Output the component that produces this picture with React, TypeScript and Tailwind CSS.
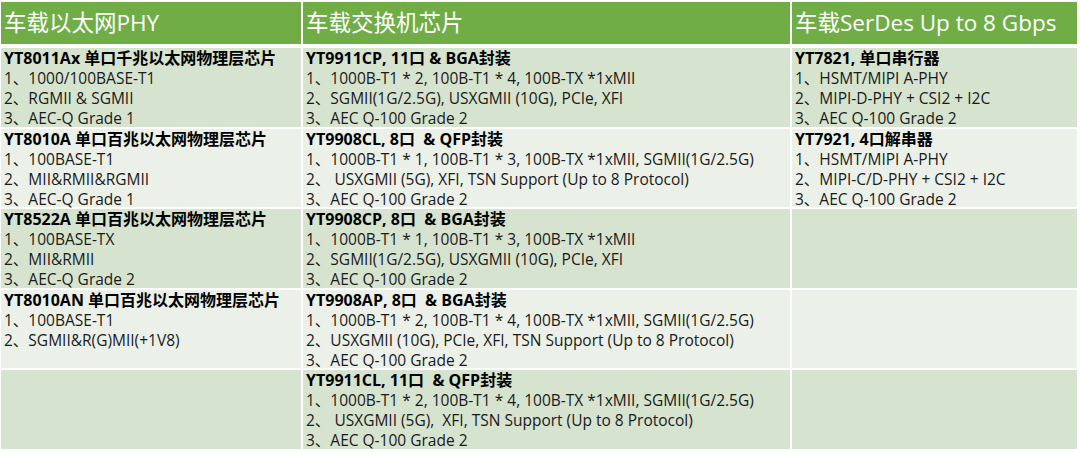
import React from "react";

type Cell = { title: string; items: string[] } | null;

const rows: Cell[][] = [
  [
    { title: "YT8011Ax 单口千兆以太网物理层芯片", items: ["1、1000/100BASE-T1", "2、RGMII & SGMII", "3、AEC-Q Grade 1"] },
    { title: "YT9911CP, 11口 & BGA封装", items: ["1、1000B-T1 * 2, 100B-T1 * 4, 100B-TX *1xMII", "2、SGMII(1G/2.5G), USXGMII (10G), PCIe, XFI", "3、AEC Q-100 Grade 2"] },
    { title: "YT7821, 单口串行器", items: ["1、HSMT/MIPI A-PHY", "2、MIPI-D-PHY + CSI2 + I2C", "3、AEC Q-100 Grade 2"] },
  ],
  [
    { title: "YT8010A 单口百兆以太网物理层芯片", items: ["1、100BASE-T1", "2、MII&RMII&RGMII", "3、AEC-Q Grade 1"] },
    { title: "YT9908CL, 8口  & QFP封装", items: ["1、1000B-T1 * 1, 100B-T1 * 3, 100B-TX *1xMII, SGMII(1G/2.5G)", "2、 USXGMII (5G), XFI, TSN Support (Up to 8 Protocol)", "3、AEC Q-100 Grade 2"] },
    { title: "YT7921, 4口解串器", items: ["1、HSMT/MIPI A-PHY", "2、MIPI-C/D-PHY + CSI2 + I2C", "3、AEC Q-100 Grade 2"] },
  ],
  [
    { title: "YT8522A 单口百兆以太网物理层芯片", items: ["1、100BASE-TX", "2、MII&RMII", "3、AEC-Q Grade 2"] },
    { title: "YT9908CP, 8口  & BGA封装", items: ["1、1000B-T1 * 1, 100B-T1 * 3, 100B-TX *1xMII", "2、SGMII(1G/2.5G), USXGMII (10G), PCIe, XFI", "3、AEC Q-100 Grade 2"] },
    null,
  ],
  [
    { title: "YT8010AN 单口百兆以太网物理层芯片", items: ["1、100BASE-T1", "2、SGMII&R(G)MII(+1V8)"] },
    { title: "YT9908AP, 8口  & BGA封装", items: ["1、1000B-T1 * 2, 100B-T1 * 4, 100B-TX *1xMII, SGMII(1G/2.5G)", "2、USXGMII (10G), PCIe, XFI, TSN Support (Up to 8 Protocol)", "3、AEC Q-100 Grade 2"] },
    null,
  ],
  [
    null,
    { title: "YT9911CL, 11口  & QFP封装", items: ["1、1000B-T1 * 2, 100B-T1 * 4, 100B-TX *1xMII, SGMII(1G/2.5G)", "2、 USXGMII (5G),  XFI, TSN Support (Up to 8 Protocol)", "3、AEC Q-100 Grade 2"] },
    null,
  ],
];

const headers = ["车载以太网PHY", "车载交换机芯片", "车载SerDes Up to 8 Gbps"];

export default function App() {
  return (
    <div
      className="w-[1080px] h-[453px] bg-white pt-[2px] pl-[1px] overflow-hidden"
      style={{ fontFamily: '"Open Sans", "Noto Sans CJK SC", sans-serif' }}
    >
      <div className="grid grid-cols-[300px_487px_285px] gap-x-[2px]">
        {headers.map((h) => (
          <div
            key={h}
            className="h-[42px] mb-[4px] bg-[#70ad47] text-white text-[22.5px] leading-[42px] pl-[3px] whitespace-nowrap"
          >
            {h}
          </div>
        ))}
        {rows.map((row, ri) => (
          <React.Fragment key={ri}>
            {row.map((cell, ci) => (
              <div
                key={ci}
                className={`h-[78.5px] mb-[2px] pl-[3px] text-[15.5px] leading-[20px] text-[#1a1a1a] whitespace-pre ${
                  ri % 2 === 0 ? "bg-[#d5e3cf]" : "bg-[#ebf1e9]"
                }`}
              >
                {cell && (
                  <>
                    <div className="font-bold text-black text-[16px]">{cell.title}</div>
                    {cell.items.map((it) => (
                      <div key={it}>{it}</div>
                    ))}
                  </>
                )}
              </div>
            ))}
          </React.Fragment>
        ))}
      </div>
    </div>
  );
}
